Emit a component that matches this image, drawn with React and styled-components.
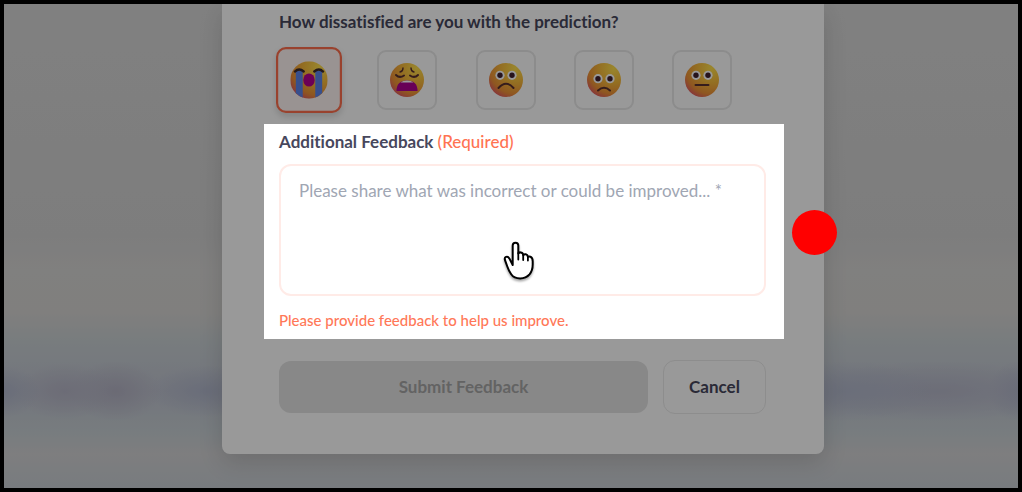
import React, { useState } from "react";
import styled, { createGlobalStyle, css } from "styled-components";

const GlobalStyle = createGlobalStyle`
  *, *::before, *::after { box-sizing: border-box; }
  body { margin: 0; }
  button, textarea { font: inherit; }
`;

const Page = styled.div`
  min-height: 100vh;
  display: flex;
  justify-content: center;
  align-items: flex-start;
  padding: 0 0 34px 24px;
  overflow: hidden;
  border: 4px solid #000;
  color: #47475c;
  font-family: Lato, "Liberation Sans", sans-serif;
  font-size: 17px;
  font-variant-ligatures: no-common-ligatures;
  line-height: 24px;
  background:
    radial-gradient(ellipse 36px 26px at 0% 80%, #b0b6ca 0%, #b0b6ca00 100%),
    radial-gradient(ellipse 50px 28px at 6% 80%, #b5b5c6 0%, #b5b5c600 100%),
    radial-gradient(ellipse 46px 30px at 11% 80%, #b3b2c3 0%, #b3b2c300 100%),
    radial-gradient(ellipse 60px 26px at 20% 80%, #b0b6ca 0%, #b0b6ca00 100%),
    radial-gradient(ellipse 90px 30px at 83% 80%, #b2b8cb 0%, #b2b8cb00 100%),
    radial-gradient(ellipse 130px 30px at 92% 80%, #b5b7c8 0%, #b5b7c800 100%),
    radial-gradient(ellipse 30px 30px at 100% 80%, #b0b5ca 0%, #b0b5ca00 100%),
    linear-gradient(#d6d6d6 0%, #d1d1d1 48%, #d6d5d4 55%, #d5d4d2 64%, #c8cfd3 70%, #c0c4d0 80%, #c7cfd4 88%, #d2d2d4 93%, #c8ced4 100%);
`;

const Card = styled.form`
  width: 100%;
  max-width: 602px;
  padding: 6px 40px 40px 42px;
  border-radius: 0 0 8px 8px;
  background: #fff;
  box-shadow: 0 8px 24px rgba(0, 0, 0, 0.14);
`;

const inset = css`
  padding-left: 15px;
  padding-right: 18px;
`;

const Question = styled.h2`
  ${inset}
  margin: 0;
  font-size: 17px;
  font-weight: 700;
  line-height: 24px;
`;

const Ratings = styled.div`
  display: flex;
  justify-content: space-between;
  padding: 16px 52px 14px 15px;
`;

const RatingButton = styled.button`
  display: grid;
  place-items: center;
  width: 60px;
  height: 60px;
  padding: 0;
  border: 2px solid ${(p) => (p.$selected ? "#ff6f4d" : "#e9e9e9")};
  border-radius: 9px;
  background: ${(p) => (p.$selected ? "#fff5f4" : "#fff")};
  box-shadow: ${(p) => (p.$selected ? "0 3px 6px rgba(0, 0, 0, 0.14)" : "none")};
  transform: ${(p) => (p.$selected ? "scale(1.1)" : "none")};
`;

const Face = styled.svg`
  display: block;
  width: 34px;
  height: 34px;
`;

const Spotlight = styled.section`
  ${inset}
  position: relative;
  z-index: 1;
  display: flex;
  flex-direction: column;
  padding-top: 6px;
  padding-bottom: 9px;
  background: #fff;
  box-shadow: 0 0 0 200vmax rgba(0, 0, 0, 0.4);
`;

const FieldLabel = styled.label`
  font-weight: 700;
`;

const Required = styled.span`
  color: #ff7352;
  font-weight: 500;
`;

const FeedbackInput = styled.textarea`
  display: block;
  width: 100%;
  height: 132px;
  margin: 10px 0 14px;
  padding: 13px 18px;
  border: 2px solid #ffebe7;
  border-radius: 12px;
  outline: none;
  resize: none;
  background: #fff;
  color: inherit;
  line-height: 24px;
  &::placeholder { color: #a0a6b3; opacity: 1; }
`;

const ErrorText = styled.p`
  margin: 0;
  color: #ff7858;
  font-size: 15px;
  font-weight: 500;
  line-height: 20px;
`;

const Actions = styled.div`
  ${inset}
  display: flex;
  align-items: center;
  gap: 15px;
  padding-top: 21px;
`;

const ActionButton = styled.button`
  flex: ${(p) => (p.$primary ? "1" : "0 0 103px")};
  height: ${(p) => (p.$primary ? "52px" : "54px")};
  padding: 0;
  border: ${(p) => (p.$primary ? "none" : "1px solid #ebebeb")};
  border-radius: 12px;
  background: ${(p) => (p.$primary ? "#e3e3e3" : "#fff")};
  color: ${(p) => (p.$primary ? "#a6a6a6" : "#47475c")};
  font-weight: 700;
`;

const Marker = styled.span`
  position: absolute;
  top: 86px;
  right: -53px;
  width: 45px;
  height: 45px;
  border-radius: 50%;
  background: #f00;
`;

const Pointer = styled.svg`
  position: absolute;
  top: 116px;
  left: 239px;
  width: 34px;
  height: 44px;
  pointer-events: none;
  filter: drop-shadow(0 2px 1px rgba(0, 0, 0, 0.35));
`;

function OpenEyes({ y }) {
  return [11, 23].map((x) => (
    <g key={x}>
      <circle cx={x} cy={y} r="4.6" fill="#fff" />
      <circle cx={x} cy={y} r="2.7" fill="#402030" />
    </g>
  ));
}

const stroke = { fill: "none", stroke: "#59302f", strokeWidth: 2, strokeLinecap: "round" };

const features = {
  crying: (
    <>
      <path d="M5 8.500h6.300v24.500q-3.300-1.200-6.300-4.200zM22.700 8.500h6.300v20.300q-3 3-6.300 4.200z" fill="#5c84ec" />
      <path d="M4.200 9.300q3.800-3.600 8 0M21.800 9.300q4.200-3.600 8 0" {...stroke} stroke="#3d2a2c" strokeWidth="2.200" />
      <ellipse cx="17" cy="17" rx="5.200" ry="6" fill="#b5008f" />
    </>
  ),
  weary: (
    <>
      <path d="M6 12q3.500 3.500 8 .500M20 12.500q4.500 3 8-.500" {...stroke} />
      <path d="M10 9q3-.500 3-4M24 9q-3-.500-3-4" {...stroke} strokeWidth="1.400" />
      <path d="M6.500 28q0-10.500 10.500-10.500T27.500 28z" fill="#ad0091" />
      <path d="M10.500 19.600q2.500-2.100 6.500-2.100t6.500 2.100z" fill="#fff" />
    </>
  ),
  frown: (
    <>
      <OpenEyes y={12.3} />
      <path d="M9.500 25q7.500-8.500 15 0" {...stroke} />
    </>
  ),
  sad: (
    <>
      <OpenEyes y={15.7} />
      <path d="M11 27.500q6-5.500 12 0" {...stroke} />
    </>
  ),
  neutral: (
    <>
      <OpenEyes y={12.3} />
      <path d="M10.500 22h13" {...stroke} />
    </>
  ),
};

function Emoji({ name }) {
  const id = `skin-${name}`;
  return (
    <Face viewBox="0 0 34 34" aria-hidden="true">
      <defs>
        <radialGradient id={id} cx="0.78" cy="0.15" r="0.98">
          <stop offset="0" stopColor="#ffe04c" />
          <stop offset="0.45" stopColor="#f6b83a" />
          <stop offset="0.78" stopColor="#ee9137" />
          <stop offset="1" stopColor="#df5465" />
        </radialGradient>
      </defs>
      <circle cx="17" cy="17" r="17" fill={`url(#${id})`} />
      {features[name]}
    </Face>
  );
}

const ratings = [
  ["crying", "Extremely dissatisfied"],
  ["weary", "Very dissatisfied"],
  ["frown", "Dissatisfied"],
  ["sad", "Slightly dissatisfied"],
  ["neutral", "Neutral"],
];

export default function App() {
  const [selected, setSelected] = useState("crying");
  return (
    <>
      <GlobalStyle />
      <Page>
        <Card onSubmit={(e) => e.preventDefault()}>
          <Question id="question">How dissatisfied are you with the prediction?</Question>
          <Ratings role="group" aria-labelledby="question">
            {ratings.map(([name, label]) => (
              <RatingButton
                key={name}
                type="button"
                aria-label={label}
                aria-pressed={selected === name}
                $selected={selected === name}
                onClick={() => setSelected(name)}
              >
                <Emoji name={name} />
              </RatingButton>
            ))}
          </Ratings>
          <Spotlight>
            <FieldLabel htmlFor="feedback">
              Additional Feedback <Required>(Required)</Required>
            </FieldLabel>
            <FeedbackInput
              id="feedback"
              aria-describedby="feedback-error"
              placeholder="Please share what was incorrect or could be improved... *"
            />
            <ErrorText id="feedback-error">Please provide feedback to help us improve.</ErrorText>
            <Marker />
            <Pointer viewBox="0 0 34 44" aria-hidden="true">
              <path
                d="M9.700 25V5.500a2.800 2.800 0 0 1 5.600 0V13.500q.7-1.300 2.400-1.100Q20 12.700 20.300 15q.9-1 2.500-.7 1.900.4 2.100 2.600 1-.7 2.500-.2 2.300.8 2.300 4.600v3.200q0 6-3.200 9.900-3.500 4-9.300 4-6.200 0-9-4.200C6.300 31.300 5.200 29.300 4.300 26.500L2 20.200q-.8-2.600 1-3.300 2-.8 3.300 1.500z"
                fill="#fff"
                stroke="#000"
                strokeWidth="2"
                strokeLinejoin="round"
              />
              <path d="M15.300 13v6.500M20.200 15v5M24.900 16.500v4" fill="none" stroke="#000" strokeWidth="1.800" strokeLinecap="round" />
            </Pointer>
          </Spotlight>
          <Actions>
            <ActionButton type="submit" $primary disabled>Submit Feedback</ActionButton>
            <ActionButton type="button">Cancel</ActionButton>
          </Actions>
        </Card>
      </Page>
    </>
  );
}
